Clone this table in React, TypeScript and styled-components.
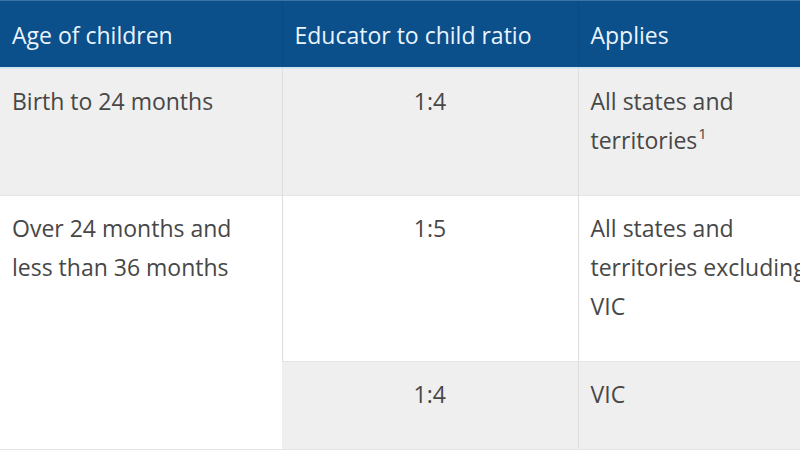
import styled, { createGlobalStyle } from 'styled-components'

const GlobalStyle = createGlobalStyle`
  html, body {
    margin: 0;
    padding: 0;
    background: #ffffff;
    overflow: hidden;
  }
  body {
    font-family: "Open Sans", "Noto Sans", sans-serif;
  }
`

type Row = {
  age?: string[]
  ageSpan?: number
  ratio: string
  applies: string[]
  note?: string
  shaded: boolean
}

const rows: Row[] = [
  {
    age: ['Birth to 24 months'],
    ratio: '1:4',
    applies: ['All states and', 'territories'],
    note: '1',
    shaded: true,
  },
  {
    age: ['Over 24 months and', 'less than 36 months'],
    ageSpan: 2,
    ratio: '1:5',
    applies: ['All states and', 'territories excluding', 'VIC'],
    shaded: false,
  },
  {
    ratio: '1:4',
    applies: ['VIC'],
    shaded: true,
  },
]

export default function App() {
  return (
    <Frame>
      <GlobalStyle />
      <Table>
        <colgroup>
          <col style={{ width: 282 }} />
          <col style={{ width: 296 }} />
          <col style={{ width: 300 }} />
        </colgroup>
        <thead>
          <tr>
            <HeadCell>Age of children</HeadCell>
            <HeadCell>Educator to child ratio</HeadCell>
            <HeadCell>Applies</HeadCell>
          </tr>
        </thead>
        <tbody>
          {rows.map((row, i) => (
            <tr key={i}>
              {row.age && (
                <Cell rowSpan={row.ageSpan} $shaded={row.shaded}>
                  {row.age.map((l, j) => (
                    <Line key={j}>{l}</Line>
                  ))}
                </Cell>
              )}
              <Cell $shaded={row.shaded} $center>
                {row.ratio}
              </Cell>
              <Cell $shaded={row.shaded}>
                {row.applies.map((l, j) => (
                  <Line key={j}>
                    {l}
                    {row.note && j === row.applies.length - 1 && <Sup>{row.note}</Sup>}
                  </Line>
                ))}
              </Cell>
            </tr>
          ))}
        </tbody>
      </Table>
    </Frame>
  )
}

const Frame = styled.div`
  width: 800px;
  height: 450px;
  overflow: hidden;
`

const Table = styled.table`
  width: 878px;
  table-layout: fixed;
  border-collapse: collapse;
  font-size: 23px;
  color: #474747;
`

const HeadCell = styled.th`
  background: #0b4f8b;
  color: #eaf4ff;
  font-weight: 400;
  text-align: left;
  height: 65px;
  padding: 1px 12px 0;
  line-height: 30px;
  vertical-align: middle;
  border-top: 1px solid #3a74a6;
  border-bottom: 2px solid #d4e4f1;
  border-left: 1px solid #0a4a82;
  white-space: nowrap;
  &:first-child {
    border-left: 0;
  }
`

const Cell = styled.td<{ $shaded: boolean; $center?: boolean }>`
  background: ${({ $shaded }) => ($shaded ? '#efefef' : '#ffffff')};
  text-align: ${({ $center }) => ($center ? 'center' : 'left')};
  vertical-align: top;
  padding: 13px 12px 35px;
  line-height: 39px;
  border-left: 1px solid #dedede;
  border-bottom: 1px solid #e4e4e4;
  white-space: nowrap;
  overflow: hidden;
  &:first-child {
    border-left: 0;
  }
`

const Line = styled.div`
  display: block;
`

const Sup = styled.sup`
  font-size: 15px;
  line-height: 0;
  vertical-align: 10px;
  margin-left: 1px;
`
